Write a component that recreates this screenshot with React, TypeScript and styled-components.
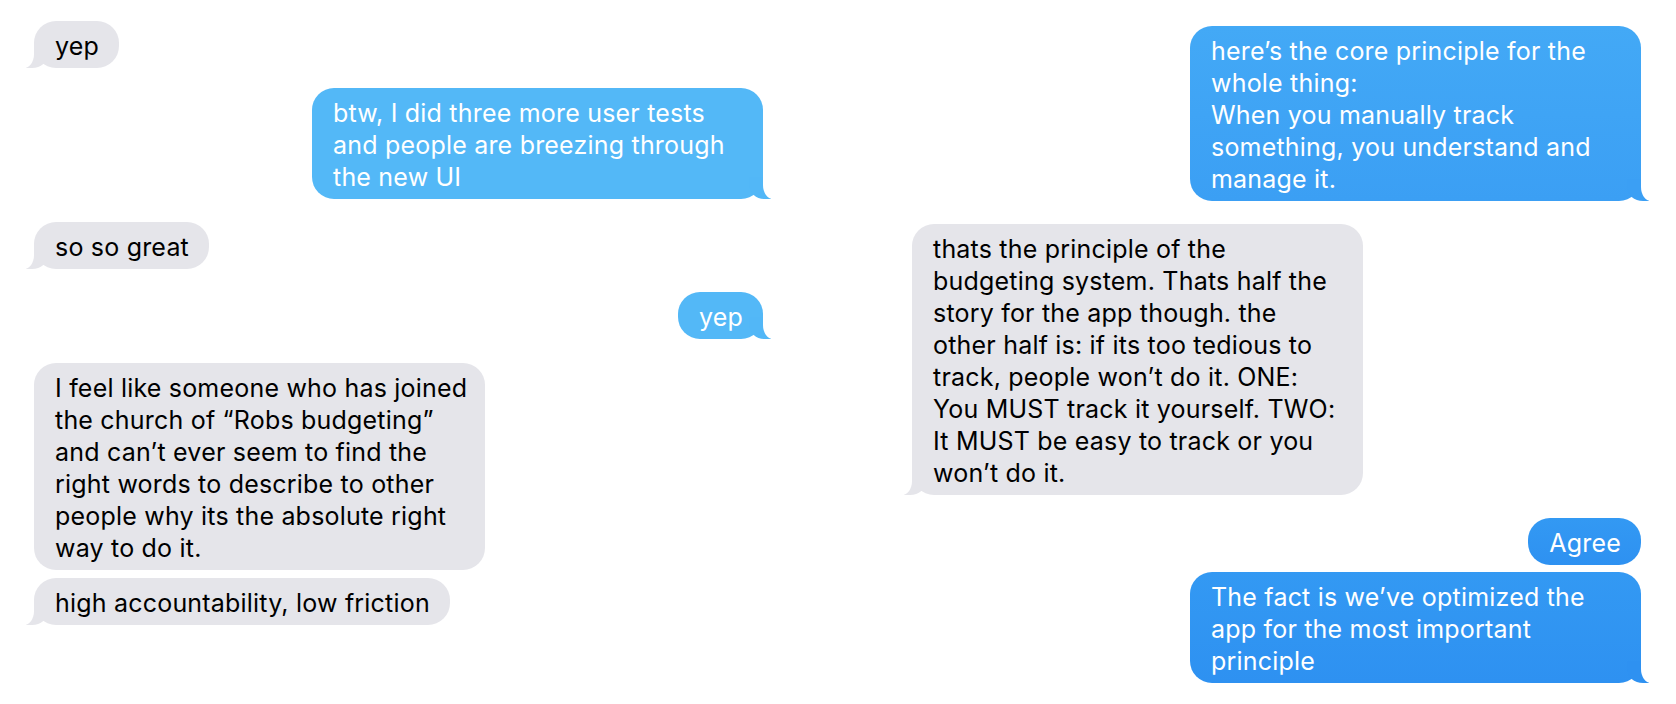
import React from "react";
import styled, { createGlobalStyle, css } from "styled-components";

const GlobalStyle = createGlobalStyle`
  html, body {
    margin: 0;
    padding: 0;
    background: #ffffff;
  }
  body {
    font-family: Inter, Roboto, "Noto Sans", "Liberation Sans", sans-serif;
    -webkit-font-smoothing: antialiased;
  }
`;

type Tone = "gray" | "light" | "mid" | "deep";

const tones: Record<Tone, { bg: string; tail: string; fg: string }> = {
  gray: { bg: "#e5e5ea", tail: "#e5e5ea", fg: "#000000" },
  light: { bg: "#53b8f7", tail: "#52b7f7", fg: "#ffffff" },
  mid: { bg: "linear-gradient(180deg, #43a9f6 0%, #3b9ff4 100%)", tail: "#3b9ff4", fg: "#ffffff" },
  deep: { bg: "linear-gradient(180deg, #3399f3 0%, #2e91f1 100%)", tail: "#2e91f1", fg: "#ffffff" },
};

const Page = styled.main`
  display: flex;
  gap: 149px;
  width: 1676px;
  height: 704px;
  box-sizing: border-box;
  padding: 0 35px 0 34px;
  overflow: hidden;
  background: #ffffff;
`;

const Column = styled.section<{ $top: number }>`
  flex: 0 0 729px;
  display: flex;
  flex-direction: column;
  padding-top: ${(p) => p.$top}px;
`;

const outTail = (color: string) => css`
  &::before {
    content: "";
    position: absolute;
    z-index: -1;
    bottom: 0;
    right: -8px;
    width: 22px;
    height: 22px;
    background: ${color};
    border-bottom-left-radius: 16px 14px;
  }
  &::after {
    content: "";
    position: absolute;
    z-index: -1;
    bottom: 0;
    right: -16px;
    width: 16px;
    height: 24px;
    background: #ffffff;
    border-bottom-left-radius: 10px 14px;
  }
`;

const inTail = (color: string) => css`
  &::before {
    content: "";
    position: absolute;
    z-index: -1;
    bottom: 0;
    left: -8px;
    width: 22px;
    height: 22px;
    background: ${color};
    border-bottom-right-radius: 16px 14px;
  }
  &::after {
    content: "";
    position: absolute;
    z-index: -1;
    bottom: 0;
    left: -16px;
    width: 16px;
    height: 24px;
    background: #ffffff;
    border-bottom-right-radius: 10px 14px;
  }
`;

const Bubble = styled.p<{
  $tone: Tone;
  $out: boolean;
  $tail: boolean;
  $gap: number;
  $wide: boolean;
}>`
  position: relative;
  z-index: 0;
  align-self: ${(p) => (p.$out ? "flex-end" : "flex-start")};
  margin: ${(p) => p.$gap}px 0 0 0;
  box-sizing: border-box;
  width: ${(p) => (p.$wide ? "451px" : "auto")};
  padding: 9px 20px 6px 21px;
  border-radius: 22px;
  background: ${(p) => tones[p.$tone].bg};
  color: ${(p) => tones[p.$tone].fg};
  font-size: 25px;
  line-height: 32px;
  letter-spacing: 0.2px;
  white-space: pre;
  ${(p) => (p.$tail ? (p.$out ? outTail(tones[p.$tone].tail) : inTail(tones[p.$tone].tail)) : "")}
`;

type Msg = {
  text: string;
  out: boolean;
  tone: Tone;
  tail: boolean;
  gap: number;
};

const left: Msg[] = [
  { text: "yep", out: false, tone: "gray", tail: true, gap: 0 },
  {
    text: "btw, I did three more user tests\nand people are breezing through\nthe new UI",
    out: true,
    tone: "light",
    tail: true,
    gap: 20,
  },
  { text: "so so great", out: false, tone: "gray", tail: true, gap: 23 },
  { text: "yep", out: true, tone: "light", tail: true, gap: 23 },
  {
    text:
      "I feel like someone who has joined\nthe church of \u201cRobs budgeting\u201d\nand can\u2019t ever seem to find the\nright words to describe to other\npeople why its the absolute right\nway to do it.",
    out: false,
    tone: "gray",
    tail: false,
    gap: 24,
  },
  { text: "high accountability, low friction", out: false, tone: "gray", tail: true, gap: 8 },
];

const right: Msg[] = [
  {
    text:
      "here\u2019s the core principle for the\nwhole thing:\nWhen you manually track\nsomething, you understand and\nmanage it.",
    out: true,
    tone: "mid",
    tail: true,
    gap: 0,
  },
  {
    text:
      "thats the principle of the\nbudgeting system. Thats half the\nstory for the app though. the\nother half is: if its too tedious to\ntrack, people won\u2019t do it. ONE:\nYou MUST track it yourself. TWO:\nIt MUST be easy to track or you\nwon\u2019t do it.",
    out: false,
    tone: "gray",
    tail: true,
    gap: 23,
  },
  { text: "Agree", out: true, tone: "deep", tail: false, gap: 23 },
  {
    text: "The fact is we\u2019ve optimized the\napp for the most important\nprinciple",
    out: true,
    tone: "deep",
    tail: true,
    gap: 7,
  },
];

const Thread: React.FC<{ items: Msg[]; top: number }> = ({ items, top }) => (
  <Column $top={top}>
    {items.map((m, i) => (
      <Bubble
        key={i}
        $tone={m.tone}
        $out={m.out}
        $tail={m.tail}
        $gap={m.gap}
        $wide={m.text.includes("\n")}
      >
        {m.text}
      </Bubble>
    ))}
  </Column>
);

export default function App() {
  return (
    <>
      <GlobalStyle />
      <Page>
        <Thread items={left} top={21} />
        <Thread items={right} top={26} />
      </Page>
    </>
  );
}
